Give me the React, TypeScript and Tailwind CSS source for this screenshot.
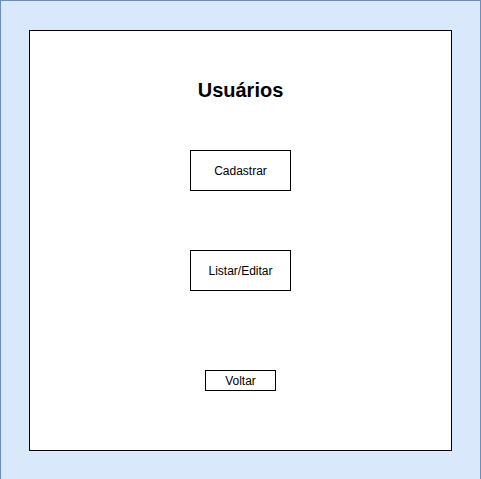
export default function App() {
  return (
    <div className="h-[479px] w-[481px] overflow-hidden border-x border-t border-[#6c8ebf] bg-[#dae8fc] pl-[28px] pt-[29px] font-['Liberation_Sans',Arial,sans-serif] text-black">
      {/* Screen frame */}
      <div className="flex h-[421px] w-[423px] flex-col items-center border border-black bg-white">
        <h1 className="mt-[47px] h-[24px] text-[20px] font-bold leading-[24px]">Usuários</h1>

        <button
          type="button"
          className="mt-[48px] flex h-[41px] w-[101px] items-center justify-center border border-black bg-white text-[12px]"
        >
          Cadastrar
        </button>

        <button
          type="button"
          className="mt-[59px] flex h-[41px] w-[101px] items-center justify-center border border-black bg-white text-[12px]"
        >
          Listar/Editar
        </button>

        <button
          type="button"
          className="mt-[79px] flex h-[21px] w-[71px] items-center justify-center border border-black bg-white text-[12px]"
        >
          Voltar
        </button>
      </div>
    </div>
  );
}
